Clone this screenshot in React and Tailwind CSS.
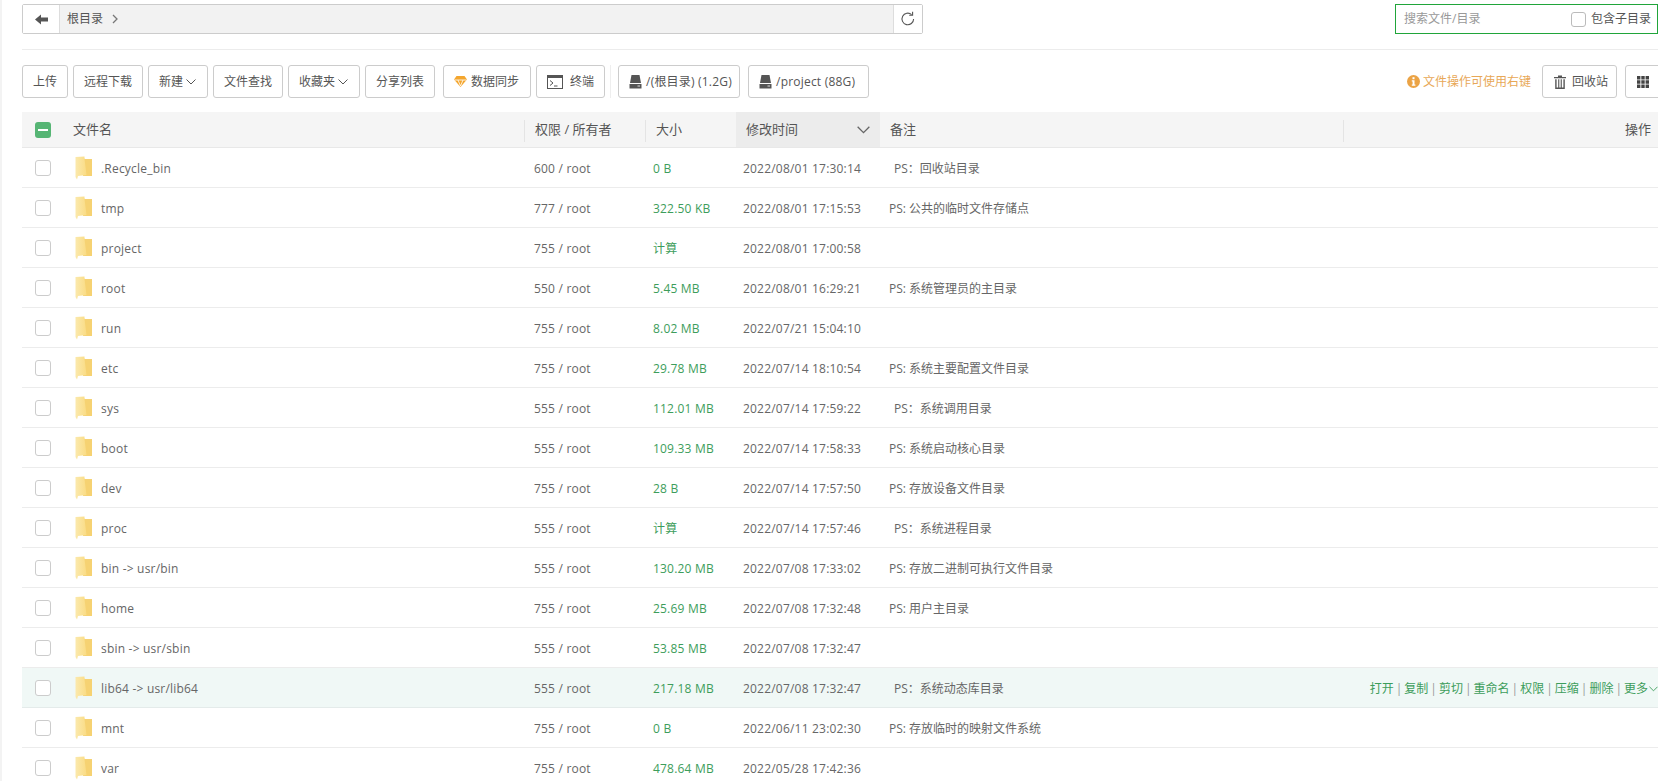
import React from 'react';

const rows = [
    { name: '.Recycle_bin', perm: '600 / root', size: '0 B', time: '2022/08/01 17:30:14', note: 'PS：回收站目录', wide: true },
    { name: 'tmp', perm: '777 / root', size: '322.50 KB', time: '2022/08/01 17:15:53', note: 'PS: 公共的临时文件存储点' },
    { name: 'project', perm: '755 / root', size: '计算', time: '2022/08/01 17:00:58', note: '' },
    { name: 'root', perm: '550 / root', size: '5.45 MB', time: '2022/08/01 16:29:21', note: 'PS: 系统管理员的主目录' },
    { name: 'run', perm: '755 / root', size: '8.02 MB', time: '2022/07/21 15:04:10', note: '' },
    { name: 'etc', perm: '755 / root', size: '29.78 MB', time: '2022/07/14 18:10:54', note: 'PS: 系统主要配置文件目录' },
    { name: 'sys', perm: '555 / root', size: '112.01 MB', time: '2022/07/14 17:59:22', note: 'PS：系统调用目录', wide: true },
    { name: 'boot', perm: '555 / root', size: '109.33 MB', time: '2022/07/14 17:58:33', note: 'PS: 系统启动核心目录' },
    { name: 'dev', perm: '755 / root', size: '28 B', time: '2022/07/14 17:57:50', note: 'PS: 存放设备文件目录' },
    { name: 'proc', perm: '555 / root', size: '计算', time: '2022/07/14 17:57:46', note: 'PS：系统进程目录', wide: true },
    { name: 'bin -> usr/bin', perm: '555 / root', size: '130.20 MB', time: '2022/07/08 17:33:02', note: 'PS: 存放二进制可执行文件目录' },
    { name: 'home', perm: '755 / root', size: '25.69 MB', time: '2022/07/08 17:32:48', note: 'PS: 用户主目录' },
    { name: 'sbin -> usr/sbin', perm: '555 / root', size: '53.85 MB', time: '2022/07/08 17:32:47', note: '' },
    { name: 'lib64 -> usr/lib64', perm: '555 / root', size: '217.18 MB', time: '2022/07/08 17:32:47', note: 'PS：系统动态库目录', wide: true, active: true },
    { name: 'mnt', perm: '755 / root', size: '0 B', time: '2022/06/11 23:02:30', note: 'PS: 存放临时的映射文件系统' },
    { name: 'var', perm: '755 / root', size: '478.64 MB', time: '2022/05/28 17:42:36', note: '' },
];

const actions = ['打开', '复制', '剪切', '重命名', '权限', '压缩', '删除'];

function Chevron({ className }) {
    return (
        <svg className={className} viewBox="0 0 10 6" fill="none" stroke="currentColor" strokeWidth="1">
            <path d="M0.5 0.5 L5 5 L9.5 0.5" />
        </svg>
    );
}

function Folder() {
    return (
        <svg className="w-[18px] h-[24px] shrink-0" viewBox="0 0 18 24">
            <defs>
                <linearGradient id="leaf" x1="0" y1="0" x2="1" y2="0">
                    <stop offset="0" stopColor="#fbe9ad" />
                    <stop offset="1" stopColor="#fadc85" />
                </linearGradient>
            </defs>
            <path d="M8 1.5 L10 3 H17 V20 H8 Z" fill="#f6d272" />
            <path d="M0.5 1 L9.5 0.5 V3 L11.5 19 L3 20 L2 23.5 L0.5 21 Z" fill="url(#leaf)" />
        </svg>
    );
}

function Disk() {
    return (
        <svg className="w-[13px] h-[14px]" viewBox="0 0 13 14" fill="#555">
            <path d="M2.5 0 H10.5 L12 8 H1 Z" />
            <path d="M0.5 9 H12.5 V13.5 H0.5 Z" />
            <rect x="8.5" y="10.5" width="2.5" height="1" fill="#ddd" />
        </svg>
    );
}

function Btn({ children, className = '' }) {
    return (
        <div className={`h-[33px] px-[10px] flex items-center border border-[#ccc] rounded-[3px] bg-white text-[#555] whitespace-nowrap ${className}`}>
            {children}
        </div>
    );
}

function HeadCell({ className = '', children, sep = true }) {
    return (
        <div className={`h-full flex items-center relative ${className}`}>
            {sep && <span className="absolute left-0 top-[8px] h-[22px] w-px bg-[#e4e4e4]"></span>}
            {children}
        </div>
    );
}

function App() {
    return (
        <div className="flex h-[781px] overflow-hidden bg-white text-[12px] text-[#666] font-['Open_Sans','Noto_Sans_CJK_SC',sans-serif]">
            <div className="w-[2px] bg-[#f3f3f3] shrink-0"></div>
            <div className="flex-1 min-w-0 pl-[20px] pt-[4px]">
                {/* path bar + search */}
                <div className="flex h-[30px] justify-between">
                    <div className="w-[901px] flex border border-[#ccc] rounded-[2px]">
                        <div className="w-[37px] flex items-center justify-center border-r border-[#ddd] bg-white">
                            <svg className="w-[13px] h-[11px]" viewBox="0 0 13 11" fill="#555">
                                <path d="M0 5.5 L6 0.5 V3.5 H13 V7.5 H6 V10.5 Z" />
                            </svg>
                        </div>
                        <div className="flex-1 bg-[#f2f2f2] flex items-center pl-[7px] text-[#555]">
                            <span>根目录</span>
                            <svg className="w-[6px] h-[10px] ml-[9px]" viewBox="0 0 6 10" fill="none" stroke="#777" strokeWidth="1.3">
                                <path d="M1 1 L5 5 L1 9" />
                            </svg>
                        </div>
                        <div className="w-[29px] flex items-center justify-center border-l border-[#ddd] bg-white">
                            <svg className="w-[16px] h-[16px]" viewBox="0 0 16 16" fill="none" stroke="#555" strokeWidth="1.1">
                                <path d="M13.6 8 A5.8 5.8 0 1 1 11.6 3.6" />
                                <path d="M12.6 0.8 V4.3 H9.2" />
                            </svg>
                        </div>
                    </div>
                    <div className="w-[263px] flex items-center border border-[#20a53a] pl-[8px] pr-[6px]">
                        <span className="flex-1 text-[#999]">搜索文件/目录</span>
                        <span className="w-[15px] h-[15px] border border-[#bbb] rounded-[3px] mr-[5px]"></span>
                        <span className="text-[#555]">包含子目录</span>
                    </div>
                </div>

                <div className="h-px bg-[#ececec] mt-[15px]"></div>

                {/* toolbar */}
                <div className="flex items-center justify-between mt-[15px]">
                    <div className="flex items-center gap-[5px]">
                        <Btn>上传</Btn>
                        <Btn>远程下载</Btn>
                        <Btn className="w-[60px]">新建<Chevron className="w-[10px] h-[6px] ml-[3px]" /></Btn>
                        <Btn>文件查找</Btn>
                        <Btn className="w-[72px]">收藏夹<Chevron className="w-[10px] h-[6px] ml-[3px]" /></Btn>
                        <Btn>分享列表</Btn>
                        <Btn className="ml-[3px] w-[88px]">
                            <svg className="w-[13px] h-[11px] mr-[4px] shrink-0" viewBox="0 0 13 11">
                                <path d="M2.5 0 H10.5 L13 3.5 L6.5 11 L0 3.5 Z" fill="#f4a62e" />
                                <path d="M0.5 4 H12.5 M4 4 L6.5 10 L9 4" stroke="#fff" strokeWidth="0.8" fill="none" />
                            </svg>
                            数据同步
                        </Btn>
                        <Btn className="w-[69px]">
                            <svg className="w-[16px] h-[14px] mr-[7px] shrink-0" viewBox="0 0 16 14" fill="none" stroke="#555" strokeWidth="1">
                                <rect x="0.5" y="0.5" width="15" height="13" />
                                <path d="M0.5 2 H15.5" strokeWidth="2" />
                                <path d="M3 5.5 L6 8 L3 10.5 M7 11 H10.5" />
                            </svg>
                            终端
                        </Btn>
                        <span className="w-px h-[33px] bg-[#eee]"></span>
                        <Btn className="ml-[2px] w-[122px] tracking-[0.2px]">
                            <span className="mr-[4px]"><Disk /></span>/(根目录) (1.2G)
                        </Btn>
                        <Btn className="ml-[3px] w-[121px] tracking-[0.2px]">
                            <span className="mr-[4px]"><Disk /></span>/project (88G)
                        </Btn>
                    </div>
                    <div className="flex items-center -mr-[24px]">
                        <svg className="w-[13px] h-[13px] mr-[3px]" viewBox="0 0 13 13">
                            <circle cx="6.5" cy="6.5" r="6.5" fill="#eba345" />
                            <rect x="5.5" y="2.2" width="2" height="2" fill="#fff" />
                            <path d="M4.8 5.3 H7.5 V9.6 H8.4 V10.8 H4.8 V9.6 H5.6 V6.5 H4.8 Z" fill="#fff" />
                        </svg>
                        <span className="text-[#e8a857] mr-[11px]">文件操作可使用右键</span>
                        <Btn className="w-[75px] pl-[11px]">
                            <svg className="w-[12px] h-[14px] mr-[6px] shrink-0" viewBox="0 0 12 14" fill="#555">
                                <path d="M4 0.5 H8 V2 H12 V3.2 H0 V2 H4 Z" />
                                <path d="M1.2 4.2 H2.6 V12.6 H4.2 V4.2 H5.3 V12.6 H6.7 V4.2 H7.8 V12.6 H9.4 V4.2 H10.8 V14 H1.2 Z" />
                            </svg>
                            回收站
                        </Btn>
                        <Btn className="w-[57px] ml-[8px] pl-[11px]">
                            <svg className="w-[12px] h-[12px]" viewBox="0 0 12 12" fill="#444">
                                <path d="M0 0 H3.4 V3.4 H0 Z M4.3 0 H7.7 V3.4 H4.3 Z M8.6 0 H12 V3.4 H8.6 Z M0 4.3 H3.4 V7.7 H0 Z M4.3 4.3 H7.7 V7.7 H4.3 Z M8.6 4.3 H12 V7.7 H8.6 Z M0 8.6 H3.4 V12 H0 Z M4.3 8.6 H7.7 V12 H4.3 Z M8.6 8.6 H12 V12 H8.6 Z" />
                            </svg>
                        </Btn>
                    </div>
                </div>

                {/* table head */}
                <div className="flex h-[36px] mt-[14px] bg-[#f5f5f5] border-b border-[#e8e8e8] text-[13px] text-[#555]">
                    <HeadCell className="w-[502px] pl-[13px]" sep={false}>
                        <span className="w-[16px] h-[16px] rounded-[3px] bg-[#56b574] flex items-center justify-center">
                            <span className="w-[10px] h-[2px] bg-white"></span>
                        </span>
                        <span className="ml-[22px]">文件名</span>
                    </HeadCell>
                    <HeadCell className="w-[121px] pl-[11px]">权限 / 所有者</HeadCell>
                    <HeadCell className="w-[91px] pl-[11px]">大小</HeadCell>
                    <div className="w-[144px] bg-[#ececec] flex items-center justify-between pl-[10px] pr-[10px]">
                        <span>修改时间</span>
                        <Chevron className="w-[13px] h-[8px] text-[#666]" />
                    </div>
                    <HeadCell className="w-[463px] pl-[10px]" sep={false}>备注</HeadCell>
                    <HeadCell className="flex-1 justify-end pr-[7px]">操作</HeadCell>
                </div>

                {/* table rows */}
                {rows.map((r) => (
                    <div key={r.name} className={`flex h-[40px] items-center border-b shrink-0 ${r.active ? 'bg-[#f0f8f6] border-[#e4ebea]' : 'border-[#ececec]'}`}>
                        <div className="w-[502px] flex items-center pl-[13px]">
                            <span className="w-[16px] h-[16px] border border-[#ccc] rounded-[3px] bg-white"></span>
                            <span className="ml-[24px]"><Folder /></span>
                            <span className="ml-[8px] pt-[2px] tracking-[0.2px]">{r.name}</span>
                        </div>
                        <div className="w-[121px] pl-[10px] pt-[2px] tracking-[0.2px]">{r.perm}</div>
                        <div className="w-[91px] pl-[8px] pt-[2px] tracking-[0.2px] text-[#3d9d5b]">{r.size}</div>
                        <div className="w-[144px] pl-[7px] pt-[2px] tracking-[0.2px]">{r.time}</div>
                        <div className={`flex-1 pt-[2px] ${r.wide ? 'pl-[14px]' : 'pl-[9px]'}`}>{r.note}</div>
                        {r.active && (
                            <div className="flex items-center pt-[2px] text-[#3d9d5b] whitespace-nowrap">
                                {actions.map((a) => (
                                    <span key={a}>{a}<span className="text-[#999] mx-[2px]">|</span></span>
                                ))}
                                <span>更多</span>
                                <Chevron className="w-[9px] h-[6px] ml-[1px]" />
                            </div>
                        )}
                    </div>
                ))}
            </div>
        </div>
    );
}

export default App;
